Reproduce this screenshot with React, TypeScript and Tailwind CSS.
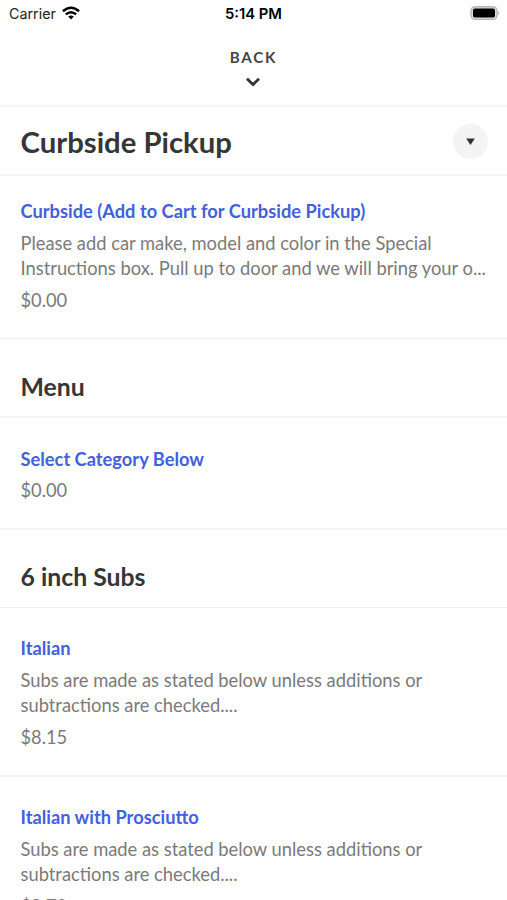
type Item = { name: string; lines?: string[]; price: string };

function MenuItem({ item, className }: { item: Item; className: string }) {
  return (
    <article className={`px-[20.5px] ${className}`}>
      <h3 className="text-[18.3px] leading-[24px] font-bold text-[#4460dc]">{item.name}</h3>
      {item.lines && (
        <p className="mt-[8px] text-[18.33px] leading-[24.5px] text-[#7a7a7a]">
          {item.lines.map((line) => (
            <span key={line} className="block whitespace-nowrap">{line}</span>
          ))}
        </p>
      )}
      <p className="mt-[7.5px] text-[18.3px] leading-[24px] text-[#7a7a7a]">{item.price}</p>
    </article>
  );
}

function SectionTitle({ children, className }: { children: string; className: string }) {
  return (
    <h2 className={`px-[20.5px] text-[24.8px] leading-[32px] font-bold text-[#363636] ${className}`}>
      {children}
    </h2>
  );
}

const subLines = ["Subs are made as stated below unless additions or", "subtractions are checked...."];

export default function App() {
  return (
    <div className="h-[900px] w-[507px] overflow-hidden bg-white font-['Lato',sans-serif]">
      <header className="h-[107px] border-b-2 border-[#f5f5f5]">
        <div className="grid h-[28px] grid-cols-3 items-center pr-[7px] pl-[9px] font-['Inter',sans-serif] text-[14.3px] text-black">
          <div className="flex items-center gap-[6px]">
            <span className="text-[#222]">Carrier</span>
            <svg className="mt-[-2px]" width="18" height="14" viewBox="0 0 18 14" fill="none" stroke="black" strokeWidth="2.5">
              <path d="M.9 5.2Q9 -1.8 17.1 5.2M3.8 8.4Q9 4 14.2 8.4" />
              <path d="M6.2 10.6Q9 8.4 11.8 10.6L9 13.6Z" fill="black" stroke="none" />
            </svg>
          </div>
          <span className="-ml-[2px] text-center text-[14.8px] font-semibold whitespace-nowrap">5:14 PM</span>
          <svg className="mt-[-2px] justify-self-end" width="30" height="14" viewBox="0 0 30 14">
            <rect x="1" y=".8" width="26" height="12.6" rx="4" fill="#ddd" stroke="#b8b8b8" strokeWidth="1.4" />
            <rect x="3" y="2.5" width="22" height="9" rx="1.8" />
            <path d="M28.2 5Q30.5 7 28.2 9Z" fill="#b5b5b5" />
          </svg>
        </div>
        <button className="mx-auto mt-[19px] flex flex-col items-center text-[15.2px] leading-[20px] font-bold tracking-[1.7px] text-[#444]">
          <span>BACK</span>
          <svg className="mt-[9.5px] mr-[1px]" width="14" height="10" viewBox="0 0 14 10" fill="none" stroke="#333" strokeWidth="2.8">
            <path d="M1 1.8L7 7.6L13 1.8" />
          </svg>
        </button>
      </header>
      <div className="flex h-[69px] items-center justify-between border-b-2 border-[#f5f5f5] pr-[19px] pl-[20.5px]">
        <h1 className="mt-[2px] text-[29.3px] font-bold text-[#363636]">Curbside Pickup</h1>
        <button className="mt-[1px] flex size-[35px] items-center justify-center rounded-full bg-[#f4f4f4]">
          <svg className="mt-[1px]" width="9" height="7" viewBox="0 0 9 7"><path d="M.2 .5H8.8L4.5 7Z" fill="#333" /></svg>
        </button>
      </div>
      <MenuItem className="h-[163px] border-b border-[#ebebeb] pt-[23px]" item={{ name: "Curbside (Add to Cart for Curbside Pickup)", lines: ["Please add car make, model and color in the Special", "Instructions box. Pull up to door and we will bring your o..."], price: "$0.00" }} />
      <SectionTitle className="h-[79px] border-b-2 border-[#f5f5f5] pt-[31.5px]">Menu</SectionTitle>
      <MenuItem className="h-[112px] border-b-2 border-[#f5f5f5] pt-[28.5px]" item={{ name: "Select Category Below", price: "$0.00" }} />
      <SectionTitle className="h-[78px] border-b border-[#f0f0f0] pt-[31px]">6 inch Subs</SectionTitle>
      <MenuItem className="h-[169px] border-b-2 border-[#f5f5f5] pt-[28.4px]" item={{ name: "Italian", lines: subLines, price: "$8.15" }} />
      <MenuItem className="h-[169px] pt-[28.4px]" item={{ name: "Italian with Prosciutto", lines: subLines, price: "$8.70" }} />
    </div>
  );
}
